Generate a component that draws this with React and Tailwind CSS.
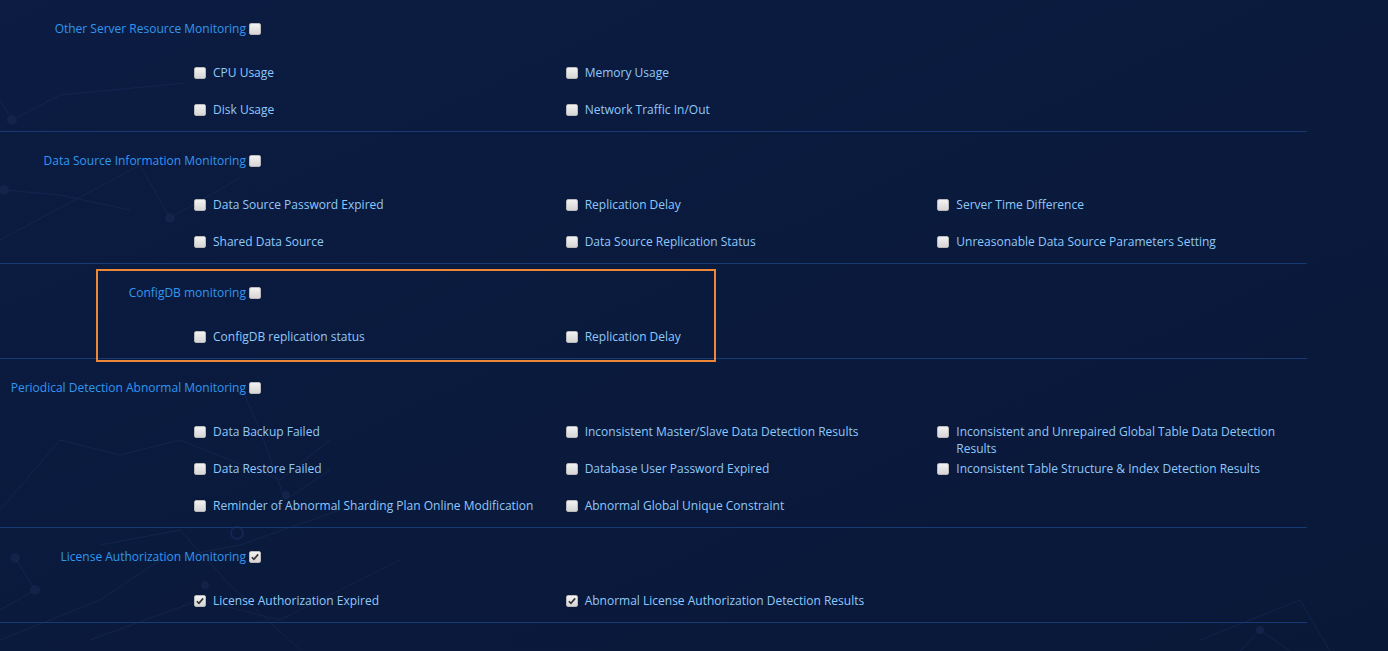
import React, { useState } from 'react';

const sections = [
  {
    title: 'Other Server Resource Monitoring',
    checked: false,
    items: ['CPU Usage', 'Memory Usage', null, 'Disk Usage', 'Network Traffic In/Out'],
  },
  {
    title: 'Data Source Information Monitoring',
    checked: false,
    items: [
      'Data Source Password Expired', 'Replication Delay', 'Server Time Difference',
      'Shared Data Source', 'Data Source Replication Status', 'Unreasonable Data Source Parameters Setting',
    ],
  },
  {
    title: 'ConfigDB monitoring',
    checked: false,
    highlight: true,
    items: ['ConfigDB replication status', 'Replication Delay'],
  },
  {
    title: 'Periodical Detection Abnormal Monitoring',
    checked: false,
    items: [
      'Data Backup Failed', 'Inconsistent Master/Slave Data Detection Results', 'Inconsistent and Unrepaired Global Table Data Detection Results',
      'Data Restore Failed', 'Database User Password Expired', 'Inconsistent Table Structure & Index Detection Results',
      'Reminder of Abnormal Sharding Plan Online Modification', 'Abnormal Global Unique Constraint',
    ],
  },
  {
    title: 'License Authorization Monitoring',
    checked: true,
    items: ['License Authorization Expired', 'Abnormal License Authorization Detection Results'],
  },
];

const Box = ({ checked }) => (
  <span className="inline-flex w-[12px] h-[12px] shrink-0 items-center justify-center rounded-[2px] border border-[#b9b9b9] bg-gradient-to-b from-[#f2f2f2] to-[#d6d6d6]">
    {checked && (
      <svg viewBox="0 0 12 12" className="w-[10px] h-[10px]">
        <path d="M2.2 6.3 L4.7 8.7 L9.8 2.8" fill="none" stroke="#333" strokeWidth="2" />
      </svg>
    )}
  </span>
);

// faint network drawing behind the page
const Network = () => (
  <svg className="absolute inset-0 w-full h-full pointer-events-none" viewBox="0 0 1388 651" preserveAspectRatio="none">
    <g stroke="#192a58" strokeWidth="1" fill="none" opacity="0.6">
      <polyline points="0,100 12,120 60,95 185,83" />
      <polyline points="0,240 140,165 170,218 240,178" />
      <polyline points="5,190 60,195 130,210" />
      <polyline points="0,510 60,440 120,455 180,440 280,480 330,440" />
      <polyline points="0,640 100,600 160,560 240,545 340,510" />
      <polyline points="15,558 35,590 0,610" />
      <polyline points="100,545 180,530 230,585 300,650" />
      <polyline points="240,385 260,430 285,500 330,470" />
      <polyline points="90,640 200,600 280,620 400,560" />
      <polyline points="1240,651 1260,630 1290,651" />
      <polyline points="1200,640 1300,600 1330,651" />
    </g>
    <g fill="#15254d" opacity="0.8">
      <circle cx="12" cy="120" r="5" />
      <circle cx="4" cy="190" r="5" />
      <circle cx="170" cy="218" r="5" />
      <circle cx="15" cy="558" r="5" />
      <circle cx="35" cy="590" r="5" />
      <circle cx="205" cy="585" r="4" />
      <circle cx="286" cy="495" r="4" />
      <circle cx="1260" cy="630" r="4" />
    </g>
    <circle cx="237" cy="533" r="6" stroke="#192a58" strokeWidth="2" fill="none" opacity="0.7" />
  </svg>
);

const Section = ({ section, state, toggle, si }) => {
  const rows = Math.ceil(section.items.length / 3);
  return (
    <div className="relative pt-5 pb-[13px] border-b border-[#173a73] w-[1307px]">
      {section.highlight && (
        <div className="absolute left-[96px] top-[5px] w-[620px] h-[93px] border-2 border-[#ee8638] pointer-events-none" />
      )}
      <div className="flex items-center h-[17px] mb-[27px]">
        <span className="w-[246px] text-right text-[#3097f0] leading-[17px] whitespace-nowrap">{section.title}</span>
        <span className="ml-[3px] flex cursor-pointer" onClick={() => toggle(si, -1)}>
          <Box checked={state[si].head} />
        </span>
      </div>
      <div className="ml-[194px] grid grid-cols-3 w-[1115px] gap-y-5" style={{ gridTemplateRows: `repeat(${rows}, 17px)` }}>
        {section.items.map((item, i) =>
          item === null ? (
            <div key={i} />
          ) : (
            <label key={i} className="flex items-start gap-[7px] cursor-pointer h-[17px]">
              <span className="mt-[3px] flex" onClick={() => toggle(si, i)}>
                <Box checked={state[si].items[i]} />
              </span>
              <span className="text-[#8fc9fb] leading-[17px]">{item}</span>
            </label>
          )
        )}
      </div>
    </div>
  );
};

export default function App() {
  const [state, setState] = useState(
    sections.map((s) => ({ head: s.checked, items: s.items.map(() => s.checked) }))
  );

  const toggle = (si, i) => {
    setState((prev) =>
      prev.map((s, idx) => {
        if (idx !== si) return s;
        if (i === -1) return { head: !s.head, items: s.items.map(() => !s.head) };
        const items = s.items.map((v, j) => (j === i ? !v : v));
        return { ...s, items };
      })
    );
  };

  return (
    <div className="relative w-[1388px] h-[651px] overflow-hidden bg-gradient-to-br from-[#0c1c42] via-[#0a1a3d] to-[#0a1838] text-[12px] font-['Open_Sans',sans-serif]">
      <Network />
      <div className="relative">
        {sections.map((s, si) => (
          <Section key={si} section={s} state={state} toggle={toggle} si={si} />
        ))}
      </div>
    </div>
  );
}
